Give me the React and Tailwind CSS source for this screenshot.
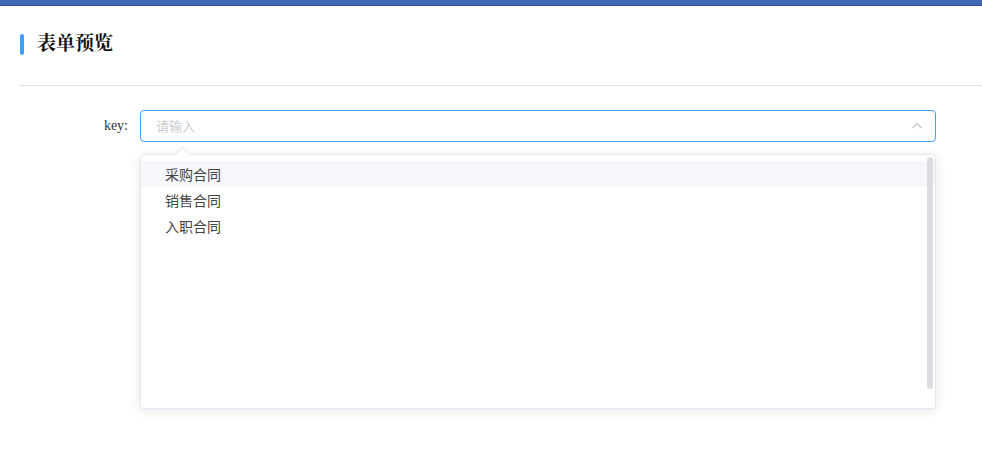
import React from "react";

export default function App() {
  const items = ["采购合同", "销售合同", "入职合同"];
  return (
    <div className="w-[982px] h-[471px] bg-white overflow-hidden relative" style={{ fontFamily: '"Liberation Sans", "Noto Sans CJK SC", sans-serif' }}>
      <div className="h-[6px] bg-[#4169b3] border-b border-[#2c4d8e]" />
      <div className="pl-[20px]">
        <div className="flex items-center h-[79px] pb-[2px]">
          <div className="w-[4px] h-[21px] rounded-[2px] bg-[#409eff]" />
          <div className="ml-[13px] text-[19px] font-bold text-[#111]" style={{ fontFamily: '"Liberation Serif", "Noto Serif CJK SC", "Noto Sans CJK SC", serif' }}>表单预览</div>
        </div>
        <div className="h-px bg-[#dcdfe6]" />
        <div className="flex items-start mt-[24px]">
          <div className="w-[120px] text-right pr-[12px] h-[32px] leading-[32px] text-[14px] text-[#333]" style={{ fontFamily: '"Liberation Serif", serif' }}>key:</div>
          <div className="relative w-[796px]">
            <div className="h-[32px] border border-[#409eff] rounded-[4px] flex items-center pl-[15px] pr-[10px]">
              <span className="flex-1 text-[13px] text-[#c9cbd1]" style={{ fontFamily: '"Noto Sans CJK SC", sans-serif' }}>请输入</span>
              <svg width="14" height="14" viewBox="0 0 14 14" className="mr-[1px]">
                <path d="M2.5 9 L7 4.5 L11.5 9" fill="none" stroke="#c0c4cc" strokeWidth="1.2" />
              </svg>
            </div>
            <div className="absolute left-0 top-[44px] w-[796px] h-[255px] bg-white border border-[#e4e7ed] rounded-[4px] shadow-[0_2px_12px_0_rgba(0,0,0,0.1)]">
              <div className="absolute -top-[6px] left-[36px] w-[11px] h-[11px] bg-white border-l border-t border-[#e4e7ed] rotate-45" />
              <div className="relative pt-[6px]">
                {items.map((t, i) => (
                  <div key={t} className={`h-[26px] leading-[26px] pl-[24px] text-[14px] text-[#444] ${i === 0 ? "bg-[#f5f7fa]" : ""}`} style={{ fontFamily: '"Noto Sans CJK SC", sans-serif' }}>{t}</div>
                ))}
              </div>
              <div className="absolute right-[2px] top-[2px] w-[6px] h-[232px] rounded-[3px] bg-[#dcdde0]" />
            </div>
          </div>
        </div>
      </div>
    </div>
  );
}
